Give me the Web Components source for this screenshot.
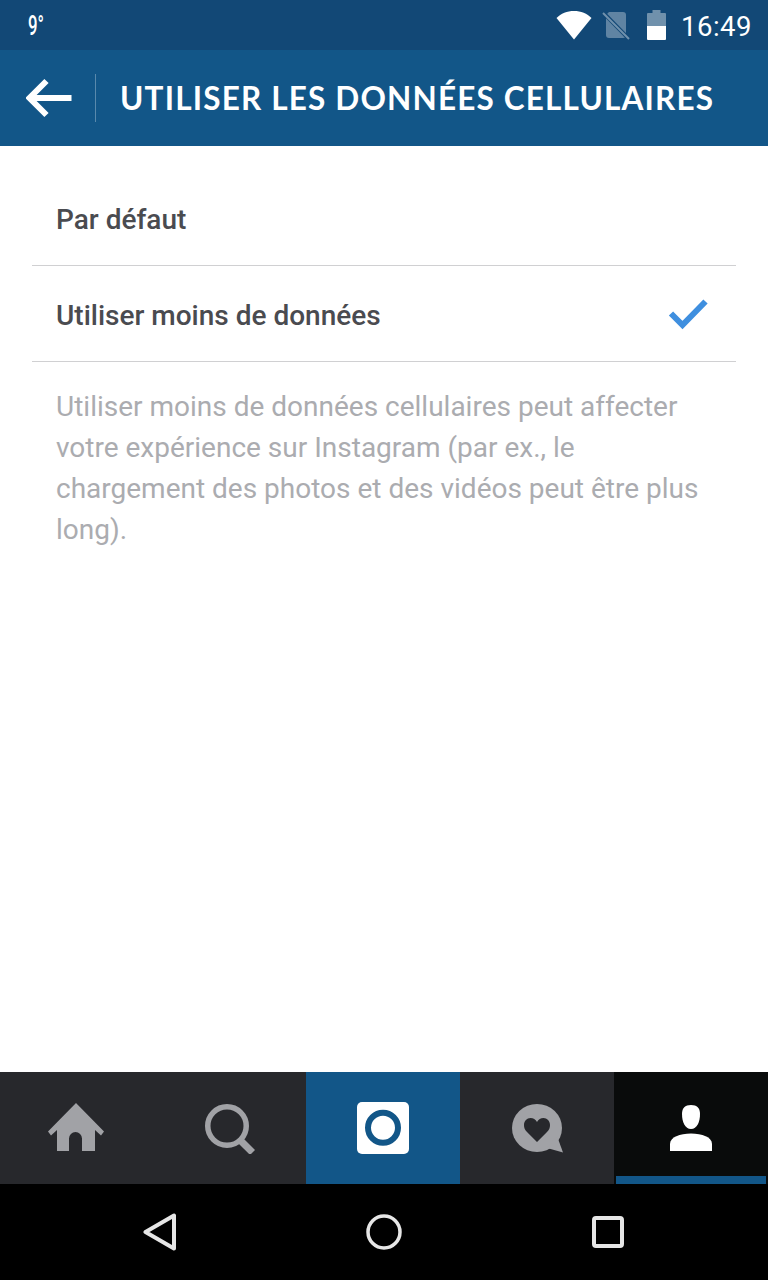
<!DOCTYPE html>
<html lang="fr">
<head>
<meta charset="utf-8">
<title>Utiliser les données cellulaires</title>
<style>
  html, body { margin: 0; height: 100%; background: #fff; }
  body { font-family: Roboto, "Liberation Sans", sans-serif; }
</style>
</head>
<body>
<app-screen>
  <status-bar slot="status"></status-bar>
  <app-header slot="header">UTILISER LES DONNÉES CELLULAIRES</app-header>
  <option-row>Par défaut</option-row>
  <option-row checked>Utiliser moins de données</option-row>
  <help-text>Utiliser moins de données cellulaires peut affecter votre expérience sur Instagram (par ex., le chargement des photos et des vidéos peut être plus long).</help-text>
  <tab-bar slot="tabs"></tab-bar>
  <nav-buttons slot="nav"></nav-buttons>
</app-screen>

<script>
const define = (name, html) => {
  customElements.define(name, class extends HTMLElement {
    constructor() {
      super()
      this.attachShadow({mode: 'open'}).innerHTML = html
    }
  })
}

define('app-screen', `
  <style>
    :host { display: flex; flex-direction: column; height: 1280px; width: 768px; overflow: hidden; }
    main { flex: 1; display: flex; flex-direction: column; padding-top: 24px; }
  </style>
  <slot name="status"></slot>
  <slot name="header"></slot>
  <main><slot></slot></main>
  <slot name="tabs"></slot>
  <slot name="nav"></slot>
`)

define('status-bar', `
  <style>
    :host { display: flex; align-items: center; height: 50px; background: #124876; color: #fff; padding: 0 16px 0 28px; }
    .temp { font: 500 28px/1 Roboto, sans-serif; transform: scaleX(.6); transform-origin: left; margin-top: 1px; }
    .right { margin-left: auto; display: flex; align-items: center; }
    svg { display: block; }
    .time { font: 400 27.5px/1 Roboto, sans-serif; margin: 3px 0 0 15px; letter-spacing: .5px; }
  </style>
  <span class="temp">9°</span>
  <div class="right">
    <svg width="36" height="30" viewBox="0 0 36 30" style="margin-right:10px"><path d="M0.5 8C5 3.500 11 1 18 1S31 3.500 35.500 8L18 29.500Z" fill="#fff"/></svg>
    <svg width="28" height="30" viewBox="0 0 28 30" style="margin-right:17px"><path d="M7 2h14a3 3 0 0 1 3 3V25a3 3 0 0 1-3 3H7a3 3 0 0 1-3-3V5Z" fill="#fff" opacity=".33"/><path d="M1 2.500L27 29" stroke="#124876" stroke-width="4"/><path d="M1 3L27 29" stroke="#fff" stroke-opacity=".4" stroke-width="2"/></svg>
    <svg width="19" height="30" viewBox="0 0 19 30"><path d="M5.500 0h8v3h4.500a1 1 0 0 1 1 1v14H0V4a1 1 0 0 1 1-1h4.500Z" fill="#fff" opacity=".4"/><path d="M0 16h19V29a1 1 0 0 1-1 1H1a1 1 0 0 1-1-1Z" fill="#fff"/></svg>
    <span class="time">16:49</span>
  </div>
`)

define('app-header', `
  <style>
    :host { display: flex; align-items: center; height: 96px; background: #125688; color: #fff; }
    .back { width: 96px; height: 48px; display: flex; align-items: center; padding-left: 26px; box-sizing: border-box; border-right: 1px solid rgba(255,255,255,.3); flex: none; }
    svg { display: block; }
    h1 { margin: 2px 0 0 24px; font: 700 31.5px/1 Lato, sans-serif; letter-spacing: 1.17px; white-space: nowrap; }
  </style>
  <div class="back"><svg width="46" height="40" viewBox="0 0 46 40"><path d="M45.500 20H4M20.500 3L3.500 20l17 17" fill="none" stroke="#fff" stroke-width="6"/></svg></div>
  <h1><slot></slot></h1>
`)

class OptionRow extends HTMLElement {
  constructor() {
    super()
    const mark = this.hasAttribute('checked')
      ? `<svg width="40" height="32" viewBox="0 0 40 32"><path d="M3 15.500l11.500 11.500L37.500 3.500" fill="none" stroke="#3f8fdf" stroke-width="6"/></svg>`
      : ''
    this.attachShadow({mode: 'open'}).innerHTML = `
      <style>
        :host { display: flex; align-items: center; justify-content: space-between; height: 96px; box-sizing: border-box; margin: 0 32px; padding: 0 28px 0 24px; border-bottom: 1px solid #d0d0d2; color: #4a4b50; font: 500 28px/1 Roboto, sans-serif; }
        span { padding-top: 4px; }
        svg { display: block; }
      </style>
      <span><slot></slot></span>${mark}`
  }
}
customElements.define('option-row', OptionRow)

define('help-text', `
  <style>
    :host { display: block; padding: 24px 60px 0 56px; color: #abacb0; font: 400 28px/41px Roboto, sans-serif; }
  </style>
  <slot></slot>
`)

define('tab-bar', `
  <style>
    :host { display: grid; grid-template-columns: 152px 154px 154px 154px 154px; height: 112px; background: #27282c; }
    div { display: flex; align-items: center; justify-content: center; position: relative; }
    svg { display: block; }
    .camera { background: #125688; }
    .active { background: #090b0b; }
    .active::after { content: ""; position: absolute; left: 2px; right: 2px; bottom: 0; height: 8px; background: #125688; }
  </style>
  <div><svg width="58" height="50" viewBox="0 0 58 50" style="margin-top:-2px"><path d="M29 1L57 29.500l-3 4L48 28V49H35V36.500a6.500 6.500 0 0 0-13 0V49H10V28l-6 5.500-3-4Z" fill="#a1a2a6"/></svg></div>
  <div><svg width="52" height="52" viewBox="0 0 52 52"><circle cx="24" cy="24" r="19.250" fill="none" stroke="#a1a2a6" stroke-width="5.500"/><path d="M37 38L49.500 50.500" stroke="#a1a2a6" stroke-width="7"/></svg></div>
  <div class="camera"><svg width="52" height="52" viewBox="0 0 52 52"><rect width="52" height="52" rx="5" fill="#fff"/><circle cx="26" cy="25.700" r="15" fill="none" stroke="#125688" stroke-width="6"/></svg></div>
  <div><svg width="52" height="50" viewBox="0 0 52 50"><ellipse cx="26" cy="25" rx="25" ry="24" fill="#a1a2a6"/><path d="M46 33L52 49.500 36 45Z" fill="#a1a2a6"/><path d="M26 39L16 29c-2.500-2.500-3-4.500-3-7 0-4 3-7 6.500-7 2.800 0 5 1.500 6.500 4 1.500-2.500 3.700-4 6.500-4 3.500 0 6.500 3 6.500 7 0 2.500-.5 4.500-3 7Z" fill="#27282c"/></svg></div>
  <div class="active"><svg width="42" height="46" viewBox="0 0 42 46"><path d="M21 0c6 0 9 3 9 9 0 8-3 15-9 15S12 17 12 9c0-6 3-9 9-9Z" fill="#fff"/><path d="M0 46V39c0-7 10-10.500 21-10.500S42 32 42 39v7Z" fill="#fff"/></svg></div>
`)

define('nav-buttons', `
  <style>
    :host { display: grid; grid-template-columns: 320px 128px 320px; align-items: center; height: 96px; background: #000; }
    div { display: flex; justify-content: center; }
    .back { justify-content: flex-end; padding-right: 143px; }
    .recent { justify-content: flex-start; padding-left: 144px; }
    svg { display: block; }
  </style>
  <div class="back"><svg width="34" height="38" viewBox="0 0 34 38"><path d="M31 2.500V35.500L2.500 19Z" fill="none" stroke="#e6e6e6" stroke-width="4" stroke-linejoin="round"/></svg></div>
  <div class="home"><svg width="36" height="36" viewBox="0 0 36 36"><circle cx="18" cy="18" r="16" fill="none" stroke="#e6e6e6" stroke-width="3.500"/></svg></div>
  <div class="recent"><svg width="32" height="32" viewBox="0 0 32 32"><rect x="2" y="2" width="28" height="28" rx="2" fill="none" stroke="#e6e6e6" stroke-width="4"/></svg></div>
`)
</script>
</body>
</html>
